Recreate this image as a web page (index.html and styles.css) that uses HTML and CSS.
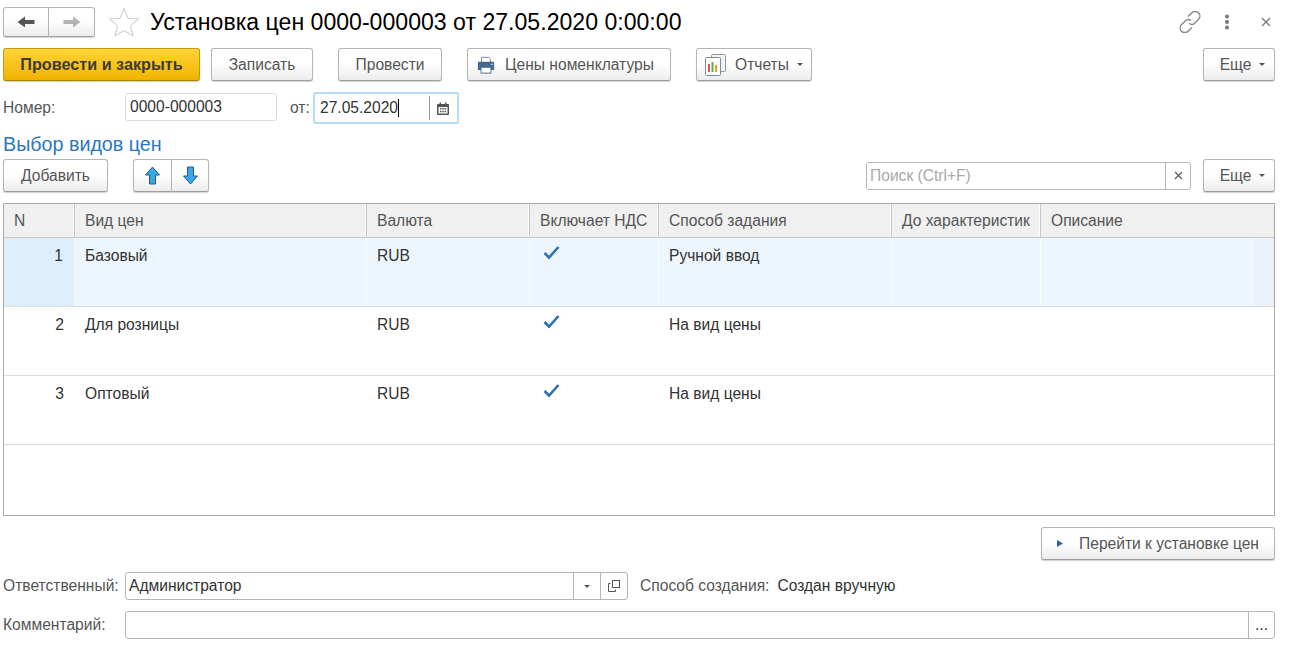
FILE: index.html
```html
<!DOCTYPE html>
<html>
<head>
    <meta charset="utf-8">
    <link rel="stylesheet" href="styles.css">
    <title>Установка цен</title>
</head>
<body>
    <!-- Title row -->
    <div class="title-row">
        <div class="btn-group nav-group">
            <button class="btn nav-btn">
                <svg width="18" height="14" viewBox="0 0 18 14"><path d="M0.5 7L8 1.5V5H17.5V9H8V12.5Z" fill="#555"/></svg>
            </button>
            <button class="btn nav-btn">
                <svg width="18" height="14" viewBox="0 0 18 14"><path d="M17.5 7L10 1.5V5H0.5V9H10V12.5Z" fill="#b4b4b4"/></svg>
            </button>
        </div>
        <svg class="star" width="32" height="30" viewBox="0 0 32 30"><path d="M16 1.5L20 11.5L30.5 12L22.5 18.8L25 29L16 23.4L7 29L9.5 18.8L1.5 12L12 11.5Z" fill="#fff" stroke="#c6c9cc" stroke-width="1"/></svg>
        <h1 class="doc-title">Установка цен 0000-000003 от 27.05.2020 0:00:00</h1>
        <div class="window-tools">
            <svg width="22" height="22" viewBox="2 2 18 18" fill="none" stroke="#8a8a8a" stroke-width="1.2"><path d="M9.5 6.5L12.5 3.5C14 2 16.6 2 18 3.5C19.4 5 19.4 7.4 18 8.8L15 11.8C13.6 13.2 11.6 13.2 10.2 12"/><path d="M12.5 15.5L9.5 18.5C8 20 5.4 20 4 18.5C2.6 17 2.6 14.6 4 13.2L7 10.2C8.4 8.8 10.4 8.8 11.8 10"/></svg>
            <svg class="dots" width="6" height="16" viewBox="0 0 6 16" fill="#777"><circle cx="3" cy="2.5" r="2"/><circle cx="3" cy="8" r="2"/><circle cx="3" cy="13.5" r="2"/></svg>
            <svg class="close" width="10" height="10" viewBox="0 0 10 10" stroke="#777" stroke-width="1.3"><path d="M1 1L9 9M9 1L1 9"/></svg>
        </div>
    </div>

    <!-- Main command bar -->
    <div class="toolbar main-bar">
        <button class="btn btn-primary w-post-close">Провести и закрыть</button>
        <button class="btn w-save">Записать</button>
        <button class="btn w-post">Провести</button>
        <button class="btn w-prices">
            <svg class="btn-icon print-icon" width="18" height="18" viewBox="0 0 20 19"><path d="M5 1H13L15 3V7H5Z" fill="#fff" stroke="#6d8299"/><path d="M1 7.5C1 6.5 1.5 6 2.5 6H17.5C18.5 6 19 6.5 19 7.5V15H1Z" fill="#44688c"/><rect x="4.5" y="12" width="11" height="6.5" fill="#fff" stroke="#44688c"/><rect x="15.5" y="8" width="2" height="1.5" fill="#cfe0f0"/></svg>
            Цены номенклатуры
        </button>
        <button class="btn w-reports">
            <svg class="btn-icon" width="21" height="22" viewBox="0 0 21 22"><rect x="6.5" y="0.5" width="14" height="17" rx="1" fill="#f2f4f6" stroke="#8b98a3"/><rect x="0.5" y="3.5" width="15" height="18" rx="1" fill="#fff" stroke="#7c8a96"/><rect x="3" y="10" width="2" height="8" fill="#d9534f"/><rect x="6.5" y="8" width="2" height="10" fill="#57ad4a"/><rect x="10" y="11" width="2" height="7" fill="#e0a030"/></svg>
            Отчеты
            <span class="caret"></span>
        </button>
        <button class="btn w-more push-right">Еще <span class="caret"></span></button>
    </div>

    <!-- Number and date -->
    <div class="number-row">
        <label class="field-label label-wide">Номер:</label>
        <div class="input input-number">0000-000003</div>
        <label class="field-label label-from">от:</label>
        <div class="input input-date">
            <span class="date-value">27.05.2020</span><span class="text-cursor"></span>
            <span class="input-btn date-btn">
                <svg width="12" height="13" viewBox="0 0 12 13"><path d="M1 2H11C11.5 2 12 2.5 12 3V12C12 12.5 11.5 13 11 13H1C0.5 13 0 12.5 0 12V3C0 2.5 0.5 2 1 2Z" fill="#555"/><rect x="2.5" y="0.5" width="1.5" height="2.5" fill="#555"/><rect x="8" y="0.5" width="1.5" height="2.5" fill="#555"/><path d="M1.5 5H10.5V11.5H1.5Z" fill="#fff"/><path d="M3 6H4.5V7.5H3ZM5.3 6H6.8V7.5H5.3ZM7.6 6H9.1V7.5H7.6ZM3 8.7H4.5V10.2H3ZM5.3 8.7H6.8V10.2H5.3ZM7.6 8.7H9.1V10.2H7.6Z" fill="#555"/></svg>
            </span>
        </div>
    </div>

    <h2 class="section-title">Выбор видов цен</h2>

    <!-- Table command bar -->
    <div class="toolbar table-bar">
        <button class="btn w-add">Добавить</button>
        <div class="btn-group arrows-group">
            <button class="btn arrow-up">
                <svg width="15" height="19" viewBox="0 0 15 19"><path d="M7.5 1L14.5 9H10.5V18H4.5V9H0.5Z" fill="#3ea6e8" stroke="#1c5f8f"/></svg>
            </button>
            <button class="btn arrow-down">
                <svg width="15" height="19" viewBox="0 0 15 19"><path d="M7.5 18L14.5 10H10.5V1H4.5V10H0.5Z" fill="#3ea6e8" stroke="#1c5f8f"/></svg>
            </button>
        </div>
        <div class="input input-search push-right">
            <span class="placeholder">Поиск (Ctrl+F)</span>
            <span class="input-btn search-clear">
                <svg width="9" height="9" viewBox="0 0 9 9" stroke="#555" stroke-width="1.1"><path d="M1 1L8 8M8 1L1 8"/></svg>
            </span>
        </div>
        <button class="btn w-more">Еще <span class="caret"></span></button>
    </div>

    <!-- Price kinds table -->
    <div class="grid-table">
        <div class="grid-row grid-head">
            <div class="cell">N</div>
            <div class="cell">Вид цен</div>
            <div class="cell">Валюта</div>
            <div class="cell">Включает НДС</div>
            <div class="cell">Способ задания</div>
            <div class="cell">До характеристик</div>
            <div class="cell">Описание</div>
        </div>
        <div class="grid-row grid-body selected">
            <div class="cell cell-num">1</div>
            <div class="cell">Базовый</div>
            <div class="cell">RUB</div>
            <div class="cell"><svg class="check" width="17" height="15" viewBox="0 0 17 14"><path d="M1.5 7.5L6 12L15.5 1.5" fill="none" stroke="#2b71b8" stroke-width="2.6"/></svg></div>
            <div class="cell">Ручной ввод</div>
            <div class="cell"></div>
            <div class="cell"></div>
        </div>
        <div class="grid-row grid-body">
            <div class="cell cell-num">2</div>
            <div class="cell">Для розницы</div>
            <div class="cell">RUB</div>
            <div class="cell"><svg class="check" width="17" height="15" viewBox="0 0 17 14"><path d="M1.5 7.5L6 12L15.5 1.5" fill="none" stroke="#2b71b8" stroke-width="2.6"/></svg></div>
            <div class="cell">На вид цены</div>
            <div class="cell"></div>
            <div class="cell"></div>
        </div>
        <div class="grid-row grid-body">
            <div class="cell cell-num">3</div>
            <div class="cell">Оптовый</div>
            <div class="cell">RUB</div>
            <div class="cell"><svg class="check" width="17" height="15" viewBox="0 0 17 14"><path d="M1.5 7.5L6 12L15.5 1.5" fill="none" stroke="#2b71b8" stroke-width="2.6"/></svg></div>
            <div class="cell">На вид цены</div>
            <div class="cell"></div>
            <div class="cell"></div>
        </div>
    </div>

    <div class="toolbar go-bar">
        <button class="btn w-go push-right">
            <svg class="go-mark" width="6" height="7" viewBox="0 0 6 7"><path d="M0 0L6 3.5L0 7Z" fill="#2a5fb0"/></svg>
            Перейти к установке цен
        </button>
    </div>

    <!-- Footer fields -->
    <div class="owner-row">
        <label class="field-label label-wide">Ответственный:</label>
        <div class="input input-owner">
            <span class="owner-value">Администратор</span>
            <span class="input-btn owner-btn"><span class="caret caret-dark"></span></span>
            <span class="input-btn owner-btn">
                <svg width="12" height="12" viewBox="0 0 12 12" fill="none" stroke="#555"><rect x="4.5" y="0.5" width="7" height="7"/><path d="M2.5 3.5H0.5V11.5H7.5V9.5"/></svg>
            </span>
        </div>
        <span class="field-label created-label">Способ создания:</span>
        <span class="created-value">Создан вручную</span>
    </div>
    <div class="comment-row">
        <label class="field-label label-wide">Комментарий:</label>
        <div class="input input-comment">
            <span class="input-btn comment-btn">...</span>
        </div>
    </div>
</body>
</html>
```

FILE: styles.css
```css
* {
    margin: 0;
    padding: 0;
    box-sizing: border-box;
}

body {
    font-family: "Liberation Sans", Arial, sans-serif;
    font-size: 15.6px;
    color: #333;
    background-color: #fff;
    padding: 7px 16px 0 3px;
}

/* Buttons */
.btn {
    display: inline-flex;
    align-items: center;
    justify-content: center;
    height: 33px;
    font-family: inherit;
    font-size: 15.6px;
    color: #555;
    background: linear-gradient(#fff, #fff 45%, #ececec);
    border: 1px solid #b5b5b5;
    border-bottom-color: #9d9d9d;
    border-radius: 3px;
    box-shadow: 0 1px 1px rgba(0, 0, 0, 0.18);
    white-space: nowrap;
}

.btn-primary {
    font-size: 16.2px;
    font-weight: bold;
    color: #3c3c3c;
    background: linear-gradient(#ffd437, #f0b400);
    border-color: #c59a12;
    border-bottom-color: #a8830e;
}

.btn-group {
    display: flex;
}

.btn-group .btn {
    border-radius: 0;
}

.btn-group .btn:first-child {
    border-radius: 3px 0 0 3px;
}

.btn-group .btn:last-child {
    border-left: 0;
    border-radius: 0 3px 3px 0;
}

.caret {
    display: inline-block;
    width: 0;
    height: 0;
    margin-left: 8px;
    border-left: 3px solid transparent;
    border-right: 3px solid transparent;
    border-top: 3px solid #555;
}

.btn-icon {
    margin-right: 9px;
}

.push-right {
    margin-left: auto;
}

/* Title row */
.title-row {
    display: flex;
    align-items: center;
    height: 30px;
}

.nav-btn {
    width: 46px;
    height: 30px;
}

.star {
    margin-left: 13px;
    flex: none;
}

.doc-title {
    margin-left: 10px;
    font-size: 23.1px;
    font-weight: normal;
    color: #000;
}

.window-tools {
    display: flex;
    align-items: center;
    margin-left: auto;
    margin-right: 4px;
}

.dots {
    margin-left: 23px;
}

.close {
    margin-left: 31px;
}

/* Toolbars */
.toolbar {
    display: flex;
    align-items: center;
}

.main-bar {
    margin-top: 11px;
}

.w-post-close { width: 197px; }
.w-save { width: 102px; margin-left: 11px; }
.w-post { width: 104px; margin-left: 25px; }
.w-prices { width: 204px; margin-left: 25px; justify-content: flex-start; padding-left: 9px; }
.print-icon { margin-right: 10px; }
.w-reports { width: 116px; margin-left: 25px; }
.w-more { width: 72px; padding-left: 7px; }
.w-add { width: 105px; }
.w-go { width: 234px; justify-content: flex-start; padding-left: 15px; }

/* Inputs */
.input {
    position: relative;
    display: flex;
    align-items: center;
    height: 28px;
    padding-left: 3px;
    color: #333;
    background-color: #fff;
    border: 1px solid #b5b5b5;
    border-radius: 3px;
}

.input-btn {
    display: flex;
    align-items: center;
    justify-content: center;
    align-self: stretch;
    border-left: 1px solid #b5b5b5;
}

.field-label {
    color: #555;
}

.label-wide {
    width: 122px;
    flex: none;
}

.number-row {
    display: flex;
    align-items: center;
    height: 32px;
    margin-top: 11px;
}

.input-number {
    width: 152px;
    margin-bottom: 2px;
    padding-left: 4px;
    border-color: #dcdcdc;
}

.label-from {
    margin-left: 13px;
    width: 23px;
}

.input-date {
    width: 146px;
    height: 32px;
    padding-left: 5px;
    border: 2px solid #b5dcf5;
    border-radius: 2px;
}

.text-cursor {
    width: 1px;
    height: 18px;
    background-color: #000;
}

.date-btn {
    width: 28px;
    margin: 2px 0 2px auto;
    padding-right: 2px;
    border-left-color: #999;
}

.section-title {
    margin-top: 8px;
    font-size: 19.7px;
    font-weight: normal;
    line-height: 24px;
    color: #2b78c2;
}

.table-bar {
    margin-top: 3px;
}

.arrows-group {
    margin-left: 25px;
}

.arrow-up {
    width: 39px;
}

.arrow-down {
    width: 37px;
}

.input-search {
    width: 325px;
    margin-right: 12px;
}

.placeholder {
    flex: 1;
    color: #a9a9a9;
}

.search-clear {
    width: 25px;
}

/* Table */
.grid-table {
    height: 313px;
    margin-top: 11px;
    border: 1px solid #a9a9a9;
}

.grid-row {
    display: grid;
    grid-template-columns: 71px 292px 163px 129px 233px 149px 1fr;
}

.grid-head {
    height: 34px;
    background-color: #f0f0f0;
    border-bottom: 1px solid #c8c8c8;
    color: #555;
}

.grid-head .cell {
    height: 33px;
    padding-top: 8px;
    border-right: 2px solid #fff;
}

.grid-head .cell:last-child {
    border-right: 0;
}

.grid-head .cell + .cell {
    box-shadow: -1px 0 0 #c8c8c8;
}

.grid-body {
    height: 69px;
    border-bottom: 1px solid #dcdcdc;
}

.cell {
    padding: 9px 10px 0;
    overflow: hidden;
    white-space: nowrap;
}

.cell-num {
    padding-right: 11px;
    text-align: right;
}

.selected {
    background-color: #edf5fd;
}

.selected .cell {
    border-right: 1px solid #f8fbfe;
}

.selected .cell:last-child {
    border-right: 0;
    background: linear-gradient(to right, #edf5fd 213px, #eaf1f8 213px);
}

.selected .cell-num {
    background-color: #dcedfb;
}

.check {
    display: block;
    margin-top: -2px;
    margin-left: 3px;
}

.go-bar {
    margin-top: 11px;
}

.go-mark {
    margin-right: 16px;
}

/* Footer fields */
.owner-row {
    display: flex;
    align-items: center;
    height: 28px;
    margin-top: 12px;
}

.input-owner {
    width: 503px;
}

.owner-value {
    flex: 1;
}

.owner-btn {
    width: 27px;
}

.owner-btn .caret {
    margin-left: 0;
}

.created-label {
    margin-left: 12px;
}

.created-value {
    margin-left: 8px;
    color: #333;
}

.comment-row {
    display: flex;
    align-items: center;
    height: 28px;
    margin-top: 11px;
}

.input-comment {
    flex: 1;
    justify-content: flex-end;
}

.comment-btn {
    width: 26px;
}
```
